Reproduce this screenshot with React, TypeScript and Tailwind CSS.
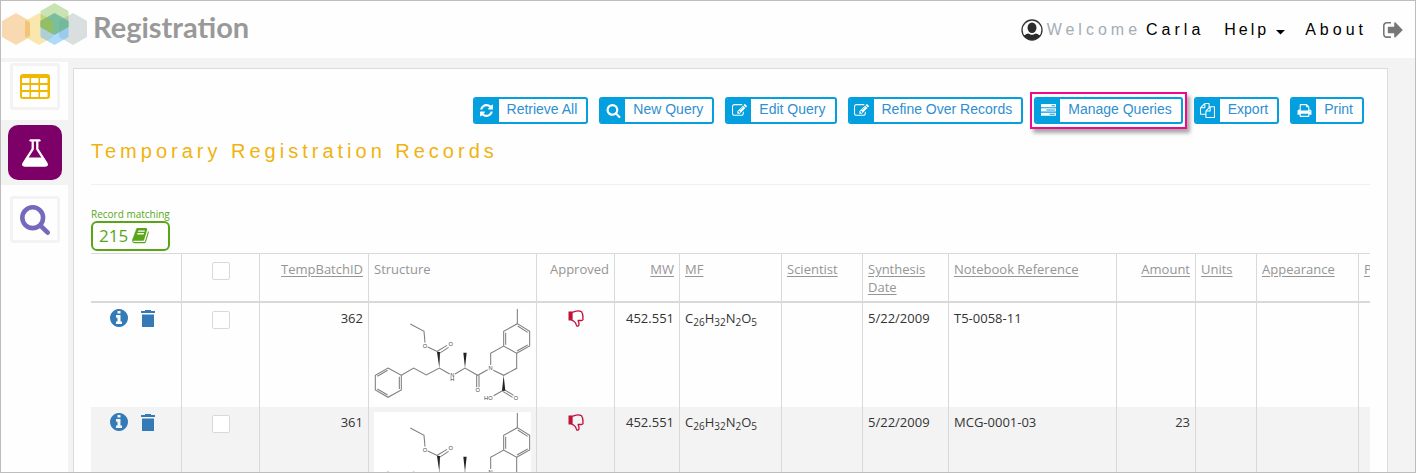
import React from 'react';

type IconProps = { className?: string };

function Glyph({ box, d, className }: { box: string; d: string; className?: string }) {
  return (
    <svg viewBox={box} className={className} fill="currentColor" aria-hidden="true">
      <path d={d} />
    </svg>
  );
}

const W1664 = '0 0 1664 1792';
const W1792 = '0 0 1792 1792';

const paths = {
  refresh:
    'M1511 1056q0 5-1 7-64 268-268 434.5t-478 166.5q-146 0-282.5-55t-243.5-157l-129 129q-19 19-45 19t-45-19-19-45v-448q0-26 19-45t45-19h448q26 0 45 19t19 45-19 45l-137 137q71 66 161 102t187 36q134 0 250-65t186-179q11-17 53-117 8-23 30-23h192q13 0 22.5 9.5t9.5 22.5zm25-800v448q0 26-19 45t-45 19h-448q-26 0-45-19t-19-45 19-45l138-138q-148-137-349-137-134 0-250 65t-186 179q-11 17-53 117-8 23-30 23h-199q-13 0-22.5-9.5t-9.5-22.5v-7q65-268 270-434.5t480-166.5q146 0 284 55.500t245 156.500l130-129q19-19 45-19t45 19 19 45z',
  search:
    'M1152 832q0-185-131.500-316.500t-316.500-131.500-316.500 131.500-131.500 316.500 131.500 316.500 316.500 131.500 316.500-131.500 131.500-316.500zm512 832q0 52-38 90t-90 38q-54 0-90-38l-343-342q-179 124-399 124-143 0-273.500-55.500t-225-150-150-225-55.500-273.500 55.500-273.500 150-225 225-150 273.500-55.500 273.500 55.500 225 150 150 225 55.500 273.500q0 220-124 399l343 343q37 37 37 90z',
  edit:
    'M888 1184l116-116-152-152-116 116v56h96v96h56zm440-720q-16-16-33 1l-350 350q-17 17-1 33t33-1l350-350q17-17 1-33zm80 594v190q0 119-84.500 203.500t-203.500 84.500h-832q-119 0-203.500-84.500t-84.500-203.500v-832q0-119 84.500-203.500t203.500-84.500h832q63 0 117 25 15 7 18 23 3 17-9 29l-49 49q-14 14-32 8-23-6-45-6h-832q-66 0-113 47t-47 113v832q0 66 47 113t113 47h832q66 0 113-47t47-113v-126q0-13 9-22l64-64q15-15 35-7t20 29zm-96-738l288 288-672 672h-288v-288zm444 132l-92 92-288-288 92-92q28-28 68-28t68 28l152 152q28 28 28 68t-28 68z',
  tasks:
    'M1024 1408h640v-128h-640v128zm-384-512h1024v-128h-1024v128zm640-512h384v-128h-384v128zm512 832v256q0 26-19 45t-45 19h-1664q-26 0-45-19t-19-45v-256q0-26 19-45t45-19h1664q26 0 45 19t19 45zm0-512v256q0 26-19 45t-45 19h-1664q-26 0-45-19t-19-45v-256q0-26 19-45t45-19h1664q26 0 45 19t19 45zm0-512v256q0 26-19 45t-45 19h-1664q-26 0-45-19t-19-45v-256q0-26 19-45t45-19h1664q26 0 45 19t19 45z',
  files:
    'M1696 384q40 0 68 28t28 68v1216q0 40-28 68t-68 28h-960q-40 0-68-28t-28-68v-288h-544q-40 0-68-28t-28-68v-672q0-40 20-88t48-76l408-408q28-28 76-48t88-20h416q40 0 68 28t28 68v328q68-40 128-40h416zm-544 213l-299 299h299v-299zm-640-384l-299 299h299v-299zm196 647l316-316v-416h-384v416q0 40-28 68t-68 28h-416v640h512v-256q0-40 20-88t48-76zm956 804v-1152h-384v416q0 40-28 68t-68 28h-416v640h896z',
  print:
    'M384 1536h896v-256h-896v256zm0-640h896v-384h-160q-40 0-68-28t-28-68v-160h-640v640zm1152 64q0-26-19-45t-45-19-45 19-19 45 19 45 45 19 45-19 19-45zm128 0v416q0 13-9.500 22.500t-22.500 9.500h-224v160q0 40-28 68t-68 28h-960q-40 0-68-28t-28-68v-160h-224q-13 0-22.500-9.500t-9.500-22.500v-416q0-79 56.500-135.500t135.500-56.500h64v-544q0-40 28-68t68-28h672q40 0 88 20t76 48l152 152q28 28 48 76t20 88v256h64q79 0 135.500 56.500t56.500 135.500z',
  signOut:
    'M640 1440q0 4 1 20t.5 26.500-3 23.500-10 19.500-20.500 6.500h-320q-119 0-203.500-84.500t-84.500-203.500v-704q0-119 84.500-203.500t203.500-84.500h320q13 0 22.500 9.500t9.500 22.500q0 4 1 20t.5 26.500-3 23.500-10 19.500-20.500 6.500h-320q-66 0-113 47t-47 113v704q0 66 47 113t113 47h312l11.500 1 11.500 3 8 5.500 7 9 2 13.500zm928-544q0 26-19 45l-544 544q-19 19-45 19t-45-19-19-45v-288h-448q-26 0-45-19t-19-45v-384q0-26 19-45t45-19h448v-288q0-26 19-45t45-19 45 19l544 544q19 19 19 45z',
  flask:
    'M1527 1448q56 89 21.500 152.500t-140.500 63.500h-1152q-106 0-140.500-63.500t21.500-152.500l503-793v-399h-64q-26 0-45-19t-19-45 19-45 45-19h512q26 0 45 19t19 45-19 45-45 19h-64v399zm-779-725l-272 429h712l-272-429-20-31v-436h-128v436z',
  book:
    'M1639 478q40 57 18 129l-275 906q-19 64-76.500 107.500t-122.500 43.500h-923q-77 0-148.500-53.500t-99.500-131.500q-24-67-2-127 0-4 3-27t4-37q1-8-3-21.500t-3-19.500q2-11 8-21t16.500-23.500 16.500-23.500q23-38 45-91.500t30-91.500q3-10 .5-30t-.5-28q3-11 17-28t17-23q21-36 42-92t25-90q1-9-2.500-32t.5-28q4-13 22-30.500t22-22.500q19-26 42.500-84.500t27.500-96.500q1-8-3-25.500t-2-26.500q2-8 9-18t18-23 17-21q8-12 16.500-30.500t15-35 16-36 19.500-32 26.500-23.500 36-11.500 47.500 5.500l-1 3q38-9 51-9h761q74 0 114 56t18 130l-274 906q-36 119-71.500 153.500t-128.500 34.500h-869q-27 0-38 15-11 16-1 43 24 70 144 70h923q29 0 56-15.500t35-41.500l300-987q7-22 5-57 38 15 59 43zm-1064 2q-4 13 2 22.500t20 9.500h608q13 0 25.500-9.500t16.500-22.500l21-64q4-13-2-22.500t-20-9.500h-608q-13 0-25.500 9.500t-16.500 22.500zm-83 256q-4 13 2 22.500t20 9.500h608q13 0 25.500-9.500t16.500-22.500l21-64q4-13-2-22.500t-20-9.500h-608q-13 0-25.500 9.500t-16.500 22.500z',
  info:
    'M1024 1376v-160q0-14-9-23t-23-9h-96v-512q0-14-9-23t-23-9h-320q-14 0-23 9t-9 23v160q0 14 9 23t23 9h96v320h-96q-14 0-23 9t-9 23v160q0 14 9 23t23 9h448q14 0 23-9t9-23zm-128-896v-160q0-14-9-23t-23-9h-192q-14 0-23 9t-9 23v160q0 14 9 23t23 9h192q14 0 23-9t9-23zm640 416q0 209-103 385.500t-279.500 279.500-385.500 103-385.500-103-279.500-279.500-103-385.500 103-385.500 279.500-279.500 385.500-103 385.500 103 279.500 279.500 103 385.500z',
};

function HexLogo() {
  const hex = (cx: number, cy: number, w: number, h: number) =>
    `${cx},${cy - h} ${cx + w},${cy - h / 2} ${cx + w},${cy + h / 2} ${cx},${cy + h} ${cx - w},${cy + h / 2} ${cx - w},${cy - h / 2}`;
  return (
    <svg viewBox="0 -1 88 46" className="h-[46px] w-[88px] shrink-0" aria-hidden="true">
      <polygon points={hex(15, 27, 14, 16)} fill="#f9d9b0" />
      <polygon points={hex(38, 27, 14, 16)} fill="#f6cf5c" fillOpacity="0.5" />
      <polygon points="24,18.500 29,21 29,33 24,35.500" fill="#f3c377" />
      <polygon points={hex(72, 27, 14, 16)} fill="#d9dedf" />
      <polygon points={hex(53.500, 27, 14, 16)} fill="#5bb8f8" fillOpacity="0.500" />
      <polygon points={hex(53.500, 17, 14, 16)} fill="#74b93c" fillOpacity="0.380" />
      <polygon points="53.500,11 67.500,19 67.500,25 53.500,33 39.500,25 39.500,19" fill="#63b092" fillOpacity="0.550" />
      <polygon points="39.500,19 46,15 52,19 52,32 39.500,25" fill="#a5c246" fillOpacity="0.600" />
    </svg>
  );
}

function TableIcon({ className }: IconProps) {
  return (
    <svg viewBox="0 0 30 25" className={className} aria-hidden="true">
      <rect width="30" height="25" rx="3" fill="#f0b800" />
      {[4, 11, 18].map((y) =>
        [2, 11, 20].map((x) => <rect key={`${x}-${y}`} x={x} y={y} width="7.500" height="5" rx="0.500" fill="#fff" />)
      )}
    </svg>
  );
}

function UserIcon() {
  return (
    <svg viewBox="0 0 22 22" className="size-[22px] shrink-0" aria-hidden="true">
      <clipPath id="user-disc">
        <circle cx="11" cy="11" r="10" />
      </clipPath>
      <circle cx="11" cy="11" r="10" fill="#fff" stroke="#333" strokeWidth="1.300" />
      <g clipPath="url(#user-disc)" fill="#2b2b2b">
        <ellipse cx="11" cy="8.700" rx="4.500" ry="5.200" />
        <path d="M2 22v-4q1-2.500 5.500-3.500 3.500 2.500 7 0 4.500 1 5.500 3.500v4z" />
      </g>
    </svg>
  );
}

function TrashIcon() {
  return (
    <svg viewBox="0 0 14 17" className="h-[17px] w-[14px]" fill="#337ab7" aria-hidden="true">
      <path d="M0 1h4V0h6v1h4v2H0zM1 4.500h12V17H1z" />
    </svg>
  );
}

function ThumbDownIcon() {
  return (
    <svg viewBox="0 0 16 17" className="h-[17px] w-4" aria-hidden="true">
      <path d="M0.500 1.500h3.500v9h-3.500z" fill="#c1123c" />
      <path
        d="M4 2.200c2-.2 3.500-1.400 6-1.400 3.200 0 4 .6 4 2.200.8.700.9 1.600.5 2.500.8.900.7 1.700.2 2.500.8 1.300.2 2.500-1.200 2.500h-3.300c.2 1.700.9 2.300.8 3.800 0 1.300-.6 1.900-2 1.900-1-.8-.8-2.500-1.700-3.500C6.300 11.700 5.500 10.500 4 10.300z"
        fill="none"
        stroke="#c1123c"
        strokeWidth="1.300"
        strokeLinejoin="round"
      />
    </svg>
  );
}

function Molecule() {
  return (
    <svg viewBox="27 24 471 285" className="block h-[95px] w-[157px] bg-white" role="img" aria-label="Structure">
      <g fill="none" stroke="#808080" strokeWidth="3.200">
        <path d="M69 204L109 226V270L69 292L31 270V226Z" />
        <path d="M68 211L37 229M103 230V267M37 267L68 285" />
        <path d="M109 226L146 204L184 225L223 204L254 222M270 222L300 204L338 226L368 209M136 72L177 94L180 128M188 141L220 156M218 153L246 136M223 160L251 142" />
        <path d="M335 226V262M342 226V262M385 211L416 226L455 205V160L416 138L377 160V195" />
        <path d="M416 138V94L457 71L494 94V138L455 160M457 71V27" />
        <path d="M422 134V98M458 78L488 97M488 135L456 153" />
        <path d="M416 270L386 287M416 268L446 286M413 274L443 292" />
      </g>
      <g fill="#222">
        <path d="M223 204L216 156H225Z" />
        <path d="M300 204L295 158H305Z" />
        <path d="M416 226L411 272H421Z" />
      </g>
      <g fill="#444" fontFamily="Liberation Sans, sans-serif" fontSize="17" textAnchor="middle">
        <text x="180" y="144">O</text>
        <text x="257" y="138">O</text>
        <text x="262" y="231">N</text>
        <text x="262" y="244">H</text>
        <text x="338" y="277">O</text>
        <text x="377" y="211">N</text>
        <text x="370" y="300">HO</text>
        <text x="453" y="301">O</text>
      </g>
    </svg>
  );
}

type Action = { label: string; box: string; d: string; highlight?: boolean };

const actions: Action[] = [
  { label: 'Retrieve All', box: '0 0 1536 1792', d: paths.refresh },
  { label: 'New Query', box: W1664, d: paths.search },
  { label: 'Edit Query', box: W1792, d: paths.edit },
  { label: 'Refine Over Records', box: W1792, d: paths.edit },
  { label: 'Manage Queries', box: W1792, d: paths.tasks, highlight: true },
  { label: 'Export', box: W1792, d: paths.files },
  { label: 'Print', box: W1664, d: paths.print },
];

function ActionButton({ label, box, d, highlight }: Action) {
  return (
    <div className="relative">
      <button
        type="button"
        className="flex h-[27px] items-stretch overflow-hidden rounded-[3px] border-2 border-[#049fdf] bg-white"
      >
        <span className="flex w-6 items-center justify-center bg-[#049fdf] text-white">
          <Glyph box={box} d={d} className="h-[15px] w-[15px]" />
        </span>
        <span className="pr-[9px] pl-2 text-[14px] leading-[21px] whitespace-nowrap text-[#2f8fd0]">{label}</span>
      </button>
      {highlight && (
        <span className="pointer-events-none absolute -inset-x-1 -inset-y-[5px] border-2 border-[#ee0a8a] shadow-[3px_4px_4px_rgba(0,0,0,0.35)]" />
      )}
    </div>
  );
}

type Column = { label: string; width: string; align?: 'right'; plain?: boolean };

const columns: Column[] = [
  { label: 'TempBatchID', width: 'w-[109px]', align: 'right' },
  { label: 'Structure', width: 'w-[168px]', plain: true },
  { label: 'Approved', width: 'w-[78px]', align: 'right', plain: true },
  { label: 'MW', width: 'w-[65px]', align: 'right' },
  { label: 'MF', width: 'w-[102px]' },
  { label: 'Scientist', width: 'w-[81px]' },
  { label: 'Synthesis Date', width: 'w-[86px]' },
  { label: 'Notebook Reference', width: 'w-[168px]' },
  { label: 'Amount', width: 'w-[79px]', align: 'right' },
  { label: 'Units', width: 'w-[61px]' },
  { label: 'Appearance', width: 'w-[102px]' },
  { label: 'Purity', width: 'w-[100px]' },
];

const rows = [
  { id: 362, mw: '452.551', date: '5/22/2009', notebook: 'T5-0058-11', amount: '' },
  { id: 361, mw: '452.551', date: '5/22/2009', notebook: 'MCG-0001-03', amount: '23' },
];

const cell = 'border-r border-[#d9d9d9] px-[5px] align-top';

function CheckBox({ label }: { label: string }) {
  return (
    <input
      type="checkbox"
      aria-label={label}
      className="mx-auto block size-[18px] appearance-none rounded-[2px] border border-[#d9d9d9] bg-white"
    />
  );
}

function RecordsTable() {
  return (
    <div className="overflow-hidden border-t border-[#d9d9d9]">
      <table className="w-[1368px] table-fixed border-separate border-spacing-0 font-['Open_Sans','Noto_Sans',sans-serif] text-[13px] leading-[18px] text-[#333]">
        <thead>
          <tr className="h-[49px] text-[#959595]">
            <th className={`${cell} w-[91px] border-b-2`} />
            <th className={`${cell} w-[78px] border-b-2 pt-2`}>
              <CheckBox label="Select all" />
            </th>
            {columns.map((c) => (
              <th
                key={c.label}
                className={`${cell} ${c.width} border-b-2 pt-[6px] font-normal ${
                  c.align === 'right' ? 'text-right' : 'text-left'
                }`}
              >
                {c.plain ? c.label : <a href="#sort" className="underline underline-offset-2">{c.label}</a>}
              </th>
            ))}
          </tr>
        </thead>
        <tbody>
          {rows.map((r) => (
            <tr key={r.id} className="h-[104px] even:bg-[#f3f3f3]">
              <td className={`${cell} pt-[6px]`}>
                <div className="flex items-center gap-[13px] pl-[14px]">
                  <button type="button" aria-label={`Details of ${r.id}`} className="text-[#337ab7]">
                    <Glyph box="0 128 1536 1536" d={paths.info} className="size-[18px]" />
                  </button>
                  <button type="button" aria-label={`Delete ${r.id}`}>
                    <TrashIcon />
                  </button>
                </div>
              </td>
              <td className={`${cell} pt-2`}>
                <CheckBox label={`Select ${r.id}`} />
              </td>
              <td className={`${cell} pt-[6px] text-right`}>{r.id}</td>
              <td className={`${cell} pt-[5px]`}>
                <Molecule />
              </td>
              <td className={`${cell} pt-[7px]`}>
                <div className="flex justify-center">
                  <ThumbDownIcon />
                </div>
              </td>
              <td className={`${cell} pt-[6px] text-right`}>{r.mw}</td>
              <td className={`${cell} pt-[6px]`}>
                C<sub className="text-[10px]">26</sub>H<sub className="text-[10px]">32</sub>N
                <sub className="text-[10px]">2</sub>O<sub className="text-[10px]">5</sub>
              </td>
              <td className={cell} />
              <td className={`${cell} pt-[6px]`}>{r.date}</td>
              <td className={`${cell} pt-[6px]`}>{r.notebook}</td>
              <td className={`${cell} pt-[6px] text-right`}>{r.amount}</td>
              <td className={cell} />
              <td className={cell} />
              <td className={cell} />
            </tr>
          ))}
        </tbody>
      </table>
    </div>
  );
}

function TopBar() {
  return (
    <header className="flex h-[57px] shrink-0 items-start justify-between bg-[#fefefe] pr-3">
      <div className="flex items-start">
        <HexLogo />
        <span className="pt-[6px] pl-1 font-['Lato','Open_Sans',sans-serif] text-[29px] leading-10 font-bold text-[#999]">
          Registration
        </span>
      </div>
      <nav className="flex items-center pt-[18px] text-base leading-[22px] tracking-[4px] text-black">
        <UserIcon />
        <span className="pl-1 text-[#a3adb5]">Welcome</span>
        <span className="pl-[5px]">Carla</span>
        <button type="button" className="flex items-center gap-[7px] pl-5 tracking-[3px]">
          Help
          <svg viewBox="0 0 9 5" className="mt-1 h-[5px] w-[9px]" aria-hidden="true">
            <path d="M0 0h9L4.500 4.500z" />
          </svg>
        </button>
        <a href="#about" className="pl-5">
          About
        </a>
        <button type="button" aria-label="Sign out" className="pl-4 text-[#777]">
          <Glyph box="0 200 1600 1400" d={paths.signOut} className="h-[18px] w-5" />
        </button>
      </nav>
    </header>
  );
}

function SideBar() {
  return (
    <nav className="mt-1 flex w-[67px] shrink-0 flex-col bg-[#fefefe]">
      <div className="flex h-[58px] justify-center pt-px">
        <a href="#records" aria-label="Records" className="flex h-[47px] w-[50px] items-center justify-center rounded-[3px] border-3 border-[#f3f3f3]">
          <TableIcon className="h-[25px] w-[30px]" />
        </a>
      </div>
      <div className="flex h-[65px] justify-center bg-[#f3f3f3] pt-[5px]">
        <a href="#temporary" aria-label="Temporary records" className="flex h-[55px] w-[54px] items-center justify-center rounded-[10px] bg-[#7d0068] text-white">
          <Glyph box={W1664} d={paths.flask} className="h-[32px] w-[30px]" />
        </a>
      </div>
      <div className="flex justify-center pt-[11px]">
        <a href="#search" aria-label="Search" className="flex h-[47px] w-[50px] items-center justify-center rounded-[3px] border-3 border-[#f3f3f3] text-[#7469bd]">
          <Glyph box="0 128 1664 1664" d={paths.search} className="size-[30px]" />
        </a>
      </div>
    </nav>
  );
}

export default function App() {
  return (
    <div className="flex h-screen flex-col overflow-hidden border border-[#bdbdbd] bg-[#f3f3f3] font-['Liberation_Sans',Arial,sans-serif]">
      <TopBar />
      <div className="flex min-h-0 flex-1">
        <SideBar />
        <main className="mt-[10px] mr-[27px] ml-[5px] min-w-0 flex-1 overflow-hidden border border-b-0 border-[#dadddd] bg-[#fefefe] px-[17px] pt-7">
          <div className="flex justify-end gap-[11px] pr-[6px]">
            {actions.map((a) => (
              <ActionButton key={a.label} {...a} />
            ))}
          </div>
          <h1 className="mt-[13px] border-b border-[#f0f0f0] pb-[19px] text-[20px] leading-7 tracking-[4px] text-[#efb310]">
            Temporary Registration Records
          </h1>
          <div className="mt-[22px] mb-[2px] inline-block font-['Open_Sans','Noto_Sans',sans-serif] text-[#58a618]">
            <div className="text-[10px] leading-[14px]">Record matching</div>
            <div className="flex h-[30px] items-center gap-1 rounded-[6px] border-2 border-[#58a618] pl-[6px] text-[17px] leading-[26px]">
              215
              <Glyph box="0 128 1664 1600" d={paths.book} className="h-4 w-[17px]" />
            </div>
          </div>
          <RecordsTable />
        </main>
      </div>
    </div>
  );
}
